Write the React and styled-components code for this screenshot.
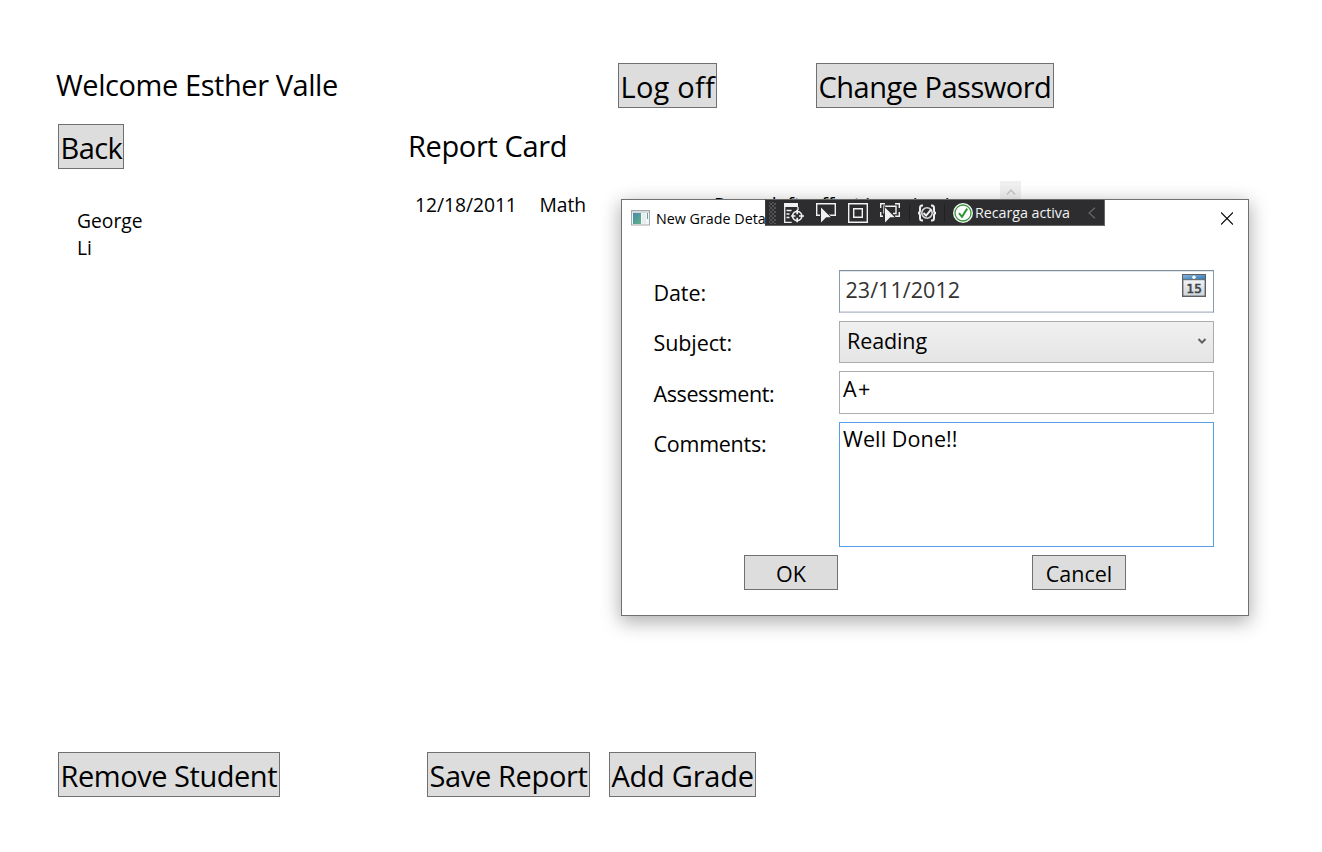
import React from "react";
import styled, { createGlobalStyle } from "styled-components";

const GlobalStyle = createGlobalStyle`
  *, *::before, *::after { box-sizing: border-box; }
  html, body { margin: 0; padding: 0; background: #fff; overflow: hidden; }
  body { font-family: "Open Sans", "Noto Sans", sans-serif; color: #000; }
  button, input, textarea { font: inherit; color: inherit; margin: 0; }
`;

const Page = styled.main`
  position: relative;
  width: 1322px;
  height: 852px;
  padding: 63px 0 55px 58px;
  display: flex;
  flex-direction: column;
  overflow: hidden;
  white-space: nowrap;
`;

const Header = styled.header`
  display: flex;
  height: 45px;
`;

const Heading = styled.h1`
  margin: 0 0 0 ${(p) => p.$indent || 0}px;
  width: ${(p) => p.$width}px;
  font-size: 29px;
  font-weight: 400;
  line-height: 44px;
  letter-spacing: ${(p) => p.$track}px;
`;

const PageButton = styled.button`
  flex: none;
  height: 45px;
  width: ${(p) => p.$width}px;
  margin-left: ${(p) => p.$gap || 0}px;
  padding: 3px 0 0 1.5px;
  border: 1px solid #707070;
  border-radius: 0;
  background: #ddd;
  font-size: 29px;
  line-height: 40px;
  letter-spacing: ${(p) => p.$track}px;
  text-align: left;
  white-space: nowrap;
`;

const Toolbar = styled.div`
  display: flex;
  height: 45px;
  margin-top: 16px;
`;

const Content = styled.section`
  flex: 1;
  display: flex;
  font-size: 19.3px;
`;

const Student = styled.div`
  width: 339px;
  padding: 38px 0 0 19px;
  line-height: 27px;
`;

const GradeList = styled.div`
  width: 624px;
  padding: 12px 0 0 18px;
  display: flex;
  justify-content: space-between;
`;

const GradeRow = styled.div`
  display: grid;
  grid-template-columns: 124.5px 174.5px 1fr;
  height: 48px;
  line-height: 48px;
  letter-spacing: -0.05px;
`;

const ScrollUp = styled.div`
  flex: none;
  width: 21px;
  height: 22px;
  background: #f0f0f0;
  display: flex;
  justify-content: center;
  padding-top: 6px;
`;

const Footer = styled.footer`
  display: flex;
  height: 45px;
`;

const Dialog = styled.div`
  position: absolute;
  left: 621px;
  top: 199px;
  width: 628px;
  height: 417px;
  border: 1px solid #707070;
  background: #fff;
  box-shadow: 0 5px 18px 1px rgba(0, 0, 0, 0.32);
`;

const TitleBar = styled.div`
  display: flex;
  align-items: center;
  height: 36px;
  padding: 0 15px 0 9px;
`;

const DialogTitle = styled.span`
  flex: 1;
  margin: 1px 0 0 6px;
  font-size: 14.3px;
  line-height: 20px;
`;

const Form = styled.form`
  display: grid;
  grid-template-columns: 185.500px 375px;
  grid-template-rows: 43px 42px 43px 125px;
  row-gap: 8px;
  padding: 34px 0 0 31.500px;
  font-size: 21.5px;
`;

const Label = styled.label`
  padding-top: ${(p) => p.$top || 8}px;
  line-height: 29px;
  letter-spacing: ${(p) => p.$track || 0}px;
`;

const Field = styled.div`
  border: 1px solid #abadb3;
  background: #fff;
  padding: ${(p) => p.$top}px 7px 0 ${(p) => p.$left || 3}px;
  line-height: 29px;
  letter-spacing: ${(p) => p.$track || 0}px;
  display: flex;
  justify-content: space-between;
  align-items: flex-start;
`;

const DateField = styled(Field)`
  border-color: #8092a0 #8a9cac #c0c7d2 #8a9cac;
  color: #333;
  box-shadow: inset 0 -1px 0 #d5dae2, inset 0 1px 0 #dfe5ea;
`;

const Combo = styled(Field)`
  border-color: #acacac;
  background: linear-gradient(#f0f0f0, #e5e5e5);
`;

const Comments = styled(Field)`
  border-color: #569de5;
`;

const Actions = styled.div`
  display: flex;
  gap: 194px;
  padding: 8px 0 0 122px;
`;

const DialogButton = styled.button`
  width: 94px;
  height: 35px;
  padding: 2px 0 0;
  border: 1px solid #707070;
  background: #ddd;
  font-size: 21.5px;
  line-height: 31px;
`;

const DebugBar = styled.div`
  position: absolute;
  left: 143px;
  top: -1px;
  width: 340px;
  height: 27px;
  padding-top: 1px;
  border: 1px solid #646866;
  border-left-color: #3d3d40;
  background: #2d2d30;
  color: #f1f1f1;
  display: flex;
  align-items: center;
`;

const Grip = styled.div`
  width: 7px;
  height: 22px;
  margin: 0 8px 0 3px;
  background-image: radial-gradient(circle, #55555a 0.7px, transparent 0.9px),
    radial-gradient(circle, #55555a 0.7px, transparent 0.9px);
  background-size: 4px 4px;
  background-position: 0 0, 2px 2px;
`;

const ToolIcon = styled.svg`
  flex: none;
  width: 20px;
  height: 20px;
  margin-right: ${(p) => p.$after}px;
`;

const Separator = styled.i`
  width: 1px;
  height: 18px;
  margin-right: ${(p) => p.$after}px;
  background: #222225;
`;

const ReloadText = styled.span`
  width: 113px;
  margin-left: 2px;
  font-size: 14.3px;
  line-height: 20px;
  letter-spacing: -0.05px;
`;

const Cursor = () => (
  <path d="M5 4.5 L14.8 14.2 H10.2 L5 19.4 Z" fill="#f1f1f1" stroke="#2d2d30" strokeWidth="1.6" paintOrder="stroke" />
);

const AppIcon = () => (
  <svg width="19" height="16" viewBox="0 0 19 16">
    <defs>
      <linearGradient id="pane" x1="0" y1="0" x2="1" y2="1">
        <stop offset="0" stopColor="#4c86ad" />
        <stop offset="1" stopColor="#5cb585" />
      </linearGradient>
    </defs>
    <rect x=".5" y=".5" width="18" height="14.5" fill="#f5f6f7" stroke="#a4a9ae" />
    <path d="M1 2h17" stroke="#d5d9dc" strokeWidth="2" />
    <rect x="2" y="3" width="8" height="11" fill="url(#pane)" />
    <rect x="11" y="3" width="4" height="11" fill="#e9edef" />
    <path d="M16.5 3v6" stroke="#5da596" />
  </svg>
);

const CalendarSvg = styled.svg`
  flex: none;
  margin-top: -1px;
`;

const CalendarIcon = () => (
  <CalendarSvg width="24" height="24" viewBox="0 0 24 24">
    <defs>
      <linearGradient id="sheet" x1="0" y1="0" x2="0" y2="1">
        <stop offset="0" stopColor="#fff" />
        <stop offset="1" stopColor="#ccd3d8" />
      </linearGradient>
      <linearGradient id="band" x1="0" y1="0" x2="1" y2="1">
        <stop offset="0" stopColor="#81b4dd" />
        <stop offset="1" stopColor="#3477b5" />
      </linearGradient>
    </defs>
    <rect x=".7" y=".7" width="22.6" height="21.6" fill="url(#sheet)" stroke="#5c6064" strokeWidth="1.4" />
    <rect x="1" y="1" width="22" height="4.5" fill="url(#band)" />
    <path d="M0 .5h24M0 5.7h24" stroke="#5c6064" />
    <circle cx="12" cy="3.3" r="1.7" fill="#fff" />
    <text
      x="12.2"
      y="18.6"
      textAnchor="middle"
      fontFamily="DejaVu Sans"
      fontSize="12"
      fill="#404347"
      stroke="#404347"
      strokeWidth=".6"
      letterSpacing="0"
    >
      15
    </text>
  </CalendarSvg>
);

function LiveToolbar() {
  return (
    <DebugBar>
      <Grip />
      <ToolIcon $after={12} viewBox="0 0 20 20">
        <path d="M0 0h14v4H0z" fill="#f1f1f1" />
        <path d="M.7 3v16.3h7M2.5 7.5h5M2.5 11h3M2.5 14.5h3M14 4v3" fill="none" stroke="#f1f1f1" strokeWidth="1.3" />
        <circle cx="13.2" cy="13" r="4.6" fill="none" stroke="#f1f1f1" strokeWidth="1.7" />
        <path d="M13.2 6.8v4.5M13.2 14.7v4.5M7 13h4.5M15 13h5" stroke="#f1f1f1" strokeWidth="1.7" />
      </ToolIcon>
      <ToolIcon $after={12} viewBox="0 0 20 20">
        <path d="M4 12.3H.7V.7h18.6v11.6H13" fill="none" stroke="#f1f1f1" strokeWidth="1.4" />
        <Cursor />
      </ToolIcon>
      <ToolIcon $after={12} viewBox="0 0 20 20">
        <path d="M.7.7h18.6v18.6H.7zM5.7 5.7h8.6v8.6H5.7z" fill="none" stroke="#f1f1f1" strokeWidth="1.4" />
      </ToolIcon>
      <ToolIcon $after={9} viewBox="0 0 20 20">
        <path d="M5 .7H.7V5M15 .7h4.3V5M.7 9v4.3H3M19.3 9v4.3H15M4 10.5V3.3h12v7.2h-3" fill="none" stroke="#f1f1f1" strokeWidth="1.4" />
        <Cursor />
      </ToolIcon>
      <Separator $after={7} />
      <ToolIcon $after={7} viewBox="0 0 20 20">
        <path
          d="M6 2.500H5Q3 2.500 3 5v2.500Q3 10 1 10q2 0 2 2.500V15q0 2.500 2 2.500h1M14 2.500h1q2 0 2 2.500v2.500q0 2.500 2 2.500-2 0-2 2.500V15q0 2.500-2 2.500h-1"
          fill="none"
          stroke="#f1f1f1"
          strokeWidth="2"
        />
        <circle cx="10" cy="10" r="5.2" fill="none" stroke="#d8d8d8" strokeWidth="1.6" />
        <path d="M6.500 10l2.600 2.600L14.500 6.200" fill="none" stroke="#f1f1f1" strokeWidth="2" />
      </ToolIcon>
      <Separator $after={8} />
      <ToolIcon $after={0} viewBox="0 0 20 20">
        <circle cx="10" cy="10" r="10" fill="#f4f4f4" />
        <circle cx="10" cy="10" r="8" fill="#fff" stroke="#389b3c" strokeWidth="1.3" />
        <path d="M6 10.2l3 3.7 5.2-8.3" fill="none" stroke="#2d9532" strokeWidth="2" />
      </ToolIcon>
      <ReloadText>Recarga activa</ReloadText>
      <svg width="8" height="12" viewBox="0 0 8 12">
        <path d="M7 .7L1 6l6 5.3" fill="none" stroke="#68686c" strokeWidth="1.2" />
      </svg>
    </DebugBar>
  );
}

function GradeDialog() {
  return (
    <Dialog>
      <TitleBar>
        <AppIcon />
        <DialogTitle>New Grade Details</DialogTitle>
        <svg width="12" height="13" viewBox="0 0 12 13">
          <path d="M0 .500l12 12M12 .500l-12 12" stroke="#000" strokeWidth="1.1" />
        </svg>
      </TitleBar>
      <Form>
        <Label $track={-0.1}>Date:</Label>
        <DateField $top={4} $left={5.5} $track={0.05}>
          23/11/2012
          <CalendarIcon />
        </DateField>
        <Label $top={7} $track={-0.1}>Subject:</Label>
        <Combo $top={4} $left={7} $track={-0.1}>
          Reading
          <svg width="8" height="29" viewBox="0 0 8 29">
            <path d="M.5 13l3.500 3.600L7.500 13" fill="none" stroke="#606060" strokeWidth="2" />
          </svg>
        </Combo>
        <Label $track={-0.4}>Assessment:</Label>
        <Field $top={2} $track={1.5}>A+</Field>
        <Label $top={7} $track={-0.25}>Comments:</Label>
        <Comments $top={1} $track={0.1}>Well Done!!</Comments>
      </Form>
      <Actions>
        <DialogButton>OK</DialogButton>
        <DialogButton>Cancel</DialogButton>
      </Actions>
      <LiveToolbar />
    </Dialog>
  );
}

export default function App() {
  return (
    <>
      <GlobalStyle />
      <Page>
        <Header>
          <Heading $indent={-2} $width={562} $track={-0.43}>Welcome Esther Valle</Heading>
          <PageButton $width={99} $track={0.25}>Log off</PageButton>
          <PageButton $width={238} $gap={99} $track={-0.5}>Change Password</PageButton>
        </Header>
        <Toolbar>
          <PageButton $width={66} $track={-0.6}>Back</PageButton>
          <Heading $indent={284} $width={200} $track={-0.36}>Report Card</Heading>
        </Toolbar>
        <Content>
          <Student>
            <div>George</div>
            <div>Li</div>
          </Student>
          <GradeList>
            <GradeRow>
              <span>12/18/2011</span>
              <span>Math</span>
              <span>Room left, effort is main aim</span>
            </GradeRow>
            <ScrollUp>
              <svg width="10" height="10" viewBox="0 0 10 10">
                <path d="M1 7.5l4-4.5 4 4.5" fill="none" stroke="#c4c4c4" strokeWidth="1.3" />
              </svg>
            </ScrollUp>
          </GradeList>
        </Content>
        <Footer>
          <PageButton $width={222} $track={-0.46}>Remove Student</PageButton>
          <PageButton $width={163} $gap={147} $track={-0.35}>Save Report</PageButton>
          <PageButton $width={147} $gap={19} $track={-0.25}>Add Grade</PageButton>
        </Footer>
        <GradeDialog />
      </Page>
    </>
  );
}
